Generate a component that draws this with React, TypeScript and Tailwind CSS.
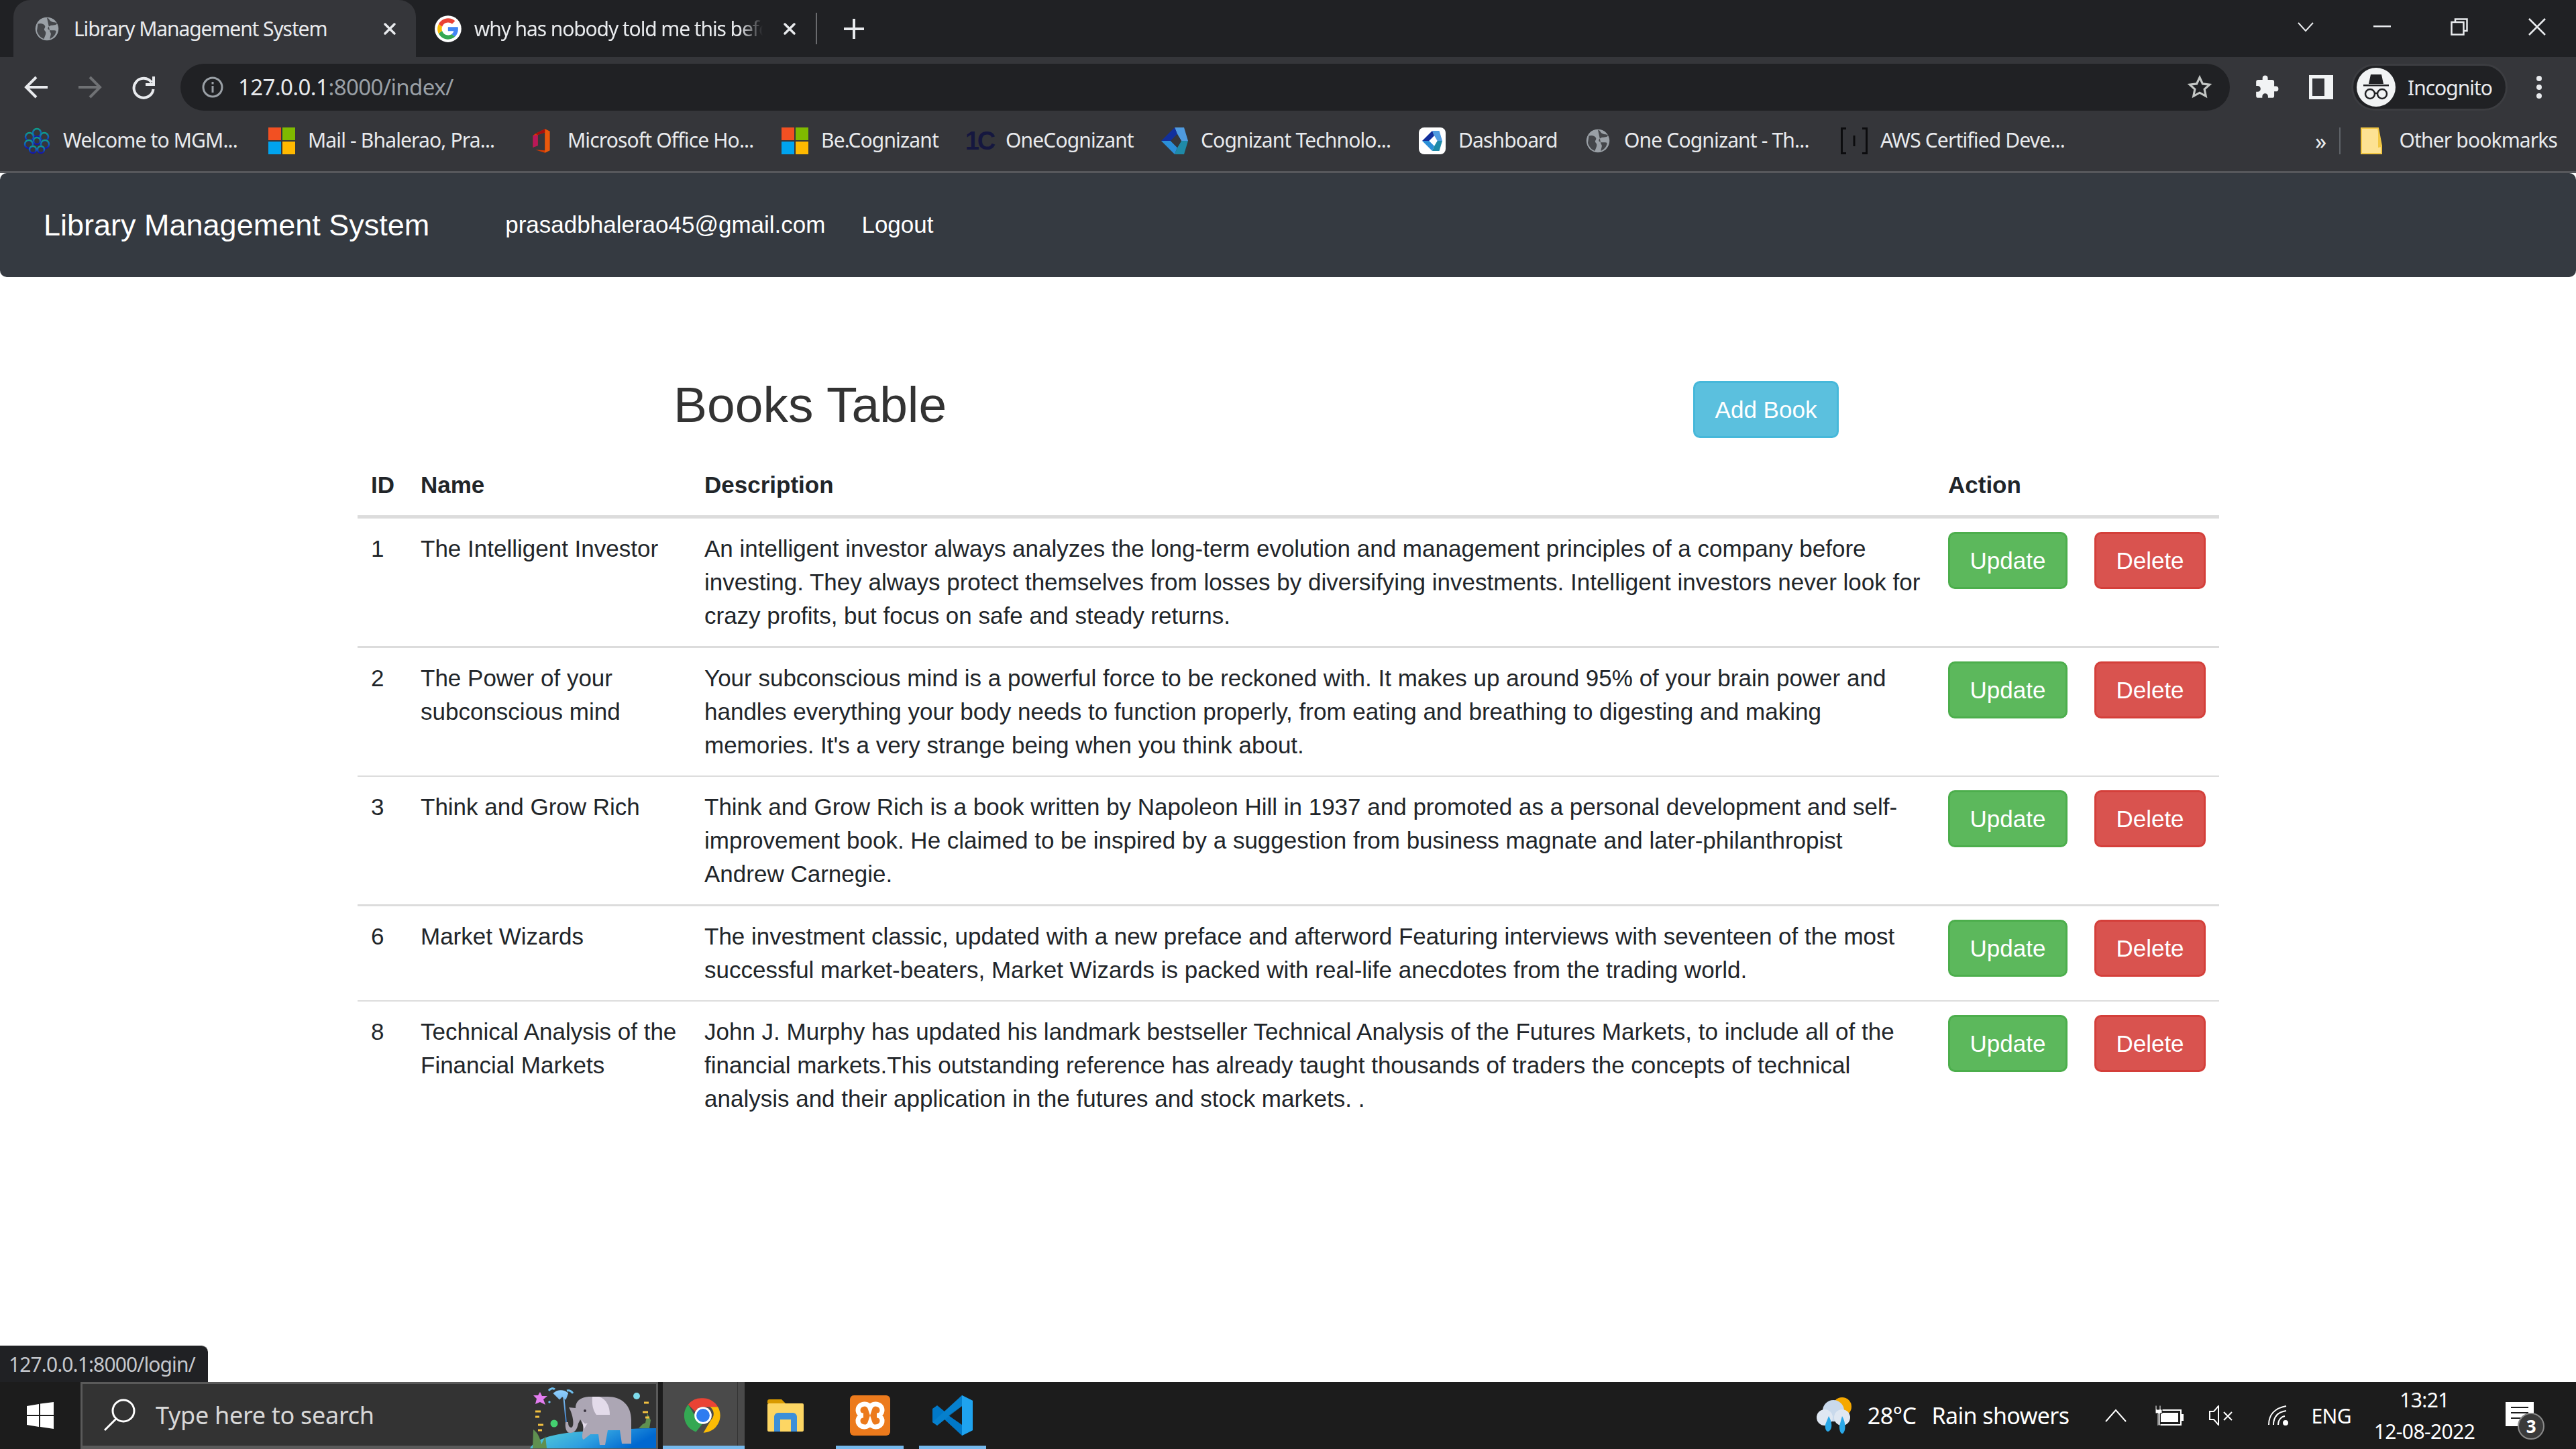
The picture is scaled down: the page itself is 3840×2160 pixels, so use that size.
const books = [
  {
    id: 1,
    name: ['The Intelligent Investor'],
    border: '',
    lines: [
      'An intelligent investor always analyzes the long-term evolution and management principles of a company before',
      'investing. They always protect themselves from losses by diversifying investments. Intelligent investors never look for',
      'crazy profits, but focus on safe and steady returns.',
    ],
  },
  {
    id: 2,
    name: ['The Power of your', 'subconscious mind'],
    border: 'border-t-[3px] border-[#dcdcdc]',
    lines: [
      'Your subconscious mind is a powerful force to be reckoned with. It makes up around 95% of your brain power and',
      'handles everything your body needs to function properly, from eating and breathing to digesting and making',
      "memories. It's a very strange being when you think about.",
    ],
  },
  {
    id: 3,
    name: ['Think and Grow Rich'],
    border: 'border-t-2 border-[#dcdcdc]',
    lines: [
      'Think and Grow Rich is a book written by Napoleon Hill in 1937 and promoted as a personal development and self-',
      'improvement book. He claimed to be inspired by a suggestion from business magnate and later-philanthropist',
      'Andrew Carnegie.',
    ],
  },
  {
    id: 6,
    name: ['Market Wizards'],
    border: 'border-t-[3px] border-[#dcdcdc]',
    lines: [
      'The investment classic, updated with a new preface and afterword Featuring interviews with seventeen of the most',
      'successful market-beaters, Market Wizards is packed with real-life anecdotes from the trading world.',
    ],
  },
  {
    id: 8,
    name: ['Technical Analysis of the', 'Financial Markets'],
    border: 'border-t-2 border-[#dcdcdc]',
    lines: [
      'John J. Murphy has updated his landmark bestseller Technical Analysis of the Futures Markets, to include all of the',
      'financial markets.This outstanding reference has already taught thousands of traders the concepts of technical',
      'analysis and their application in the futures and stock markets. .',
    ],
  },
];

const GlobeIcon = ({ size = 36 }: { size?: number }) => (
  <svg width={size} height={size} viewBox="0 0 24 24">
    <circle cx="12" cy="12" r="11.5" fill="#9aa0a6" />
    <path d="M3 7c3-1 6 0 7 2s-2 3 0 5 0 5-1 8c-3-1-6-4-7-8M12 1c3 1 2 3 5 4s4 0 5 2c-2 2-5 1-7 2s-3 3-1 4 5 0 7 1c0 3-2 6-6 8 0-3 2-5 0-7" fill="#35363a" opacity="0.85" />
  </svg>
);

const GoogleIcon = () => (
  <svg width="40" height="40" viewBox="0 0 48 48">
    <circle cx="24" cy="24" r="24" fill="#fff" />
    <g transform="translate(5 5) scale(0.79)">
      <path fill="#EA4335" d="M24 9.5c3.5 0 6.7 1.2 9.2 3.600l6.900-6.900C35.900 2.400 30.500 0 24 0 14.600 0 6.500 5.400 2.600 13.200l8 6.200C12.500 13.700 17.800 9.500 24 9.500z" />
      <path fill="#4285F4" d="M47 24.500c0-1.600-.1-3.100-.4-4.500H24v9h12.900c-.6 3-2.200 5.500-4.800 7.200l7.700 6C44.300 38 47 31.900 47 24.500z" />
      <path fill="#FBBC05" d="M10.600 28.600c-.5-1.400-.8-3-.8-4.600s.3-3.200.8-4.600l-8-6.200C.9 16.500 0 20.100 0 24s.9 7.500 2.600 10.800l8-6.200z" />
      <path fill="#34A853" d="M24 48c6.500 0 11.900-2.100 15.900-5.800l-7.700-6c-2.200 1.500-5 2.300-8.200 2.300-6.200 0-11.500-4.200-13.400-9.900l-8 6.200C6.500 42.600 14.600 48 24 48z" />
    </g>
  </svg>
);

const MsIcon = () => (
  <svg width="40" height="40" viewBox="0 0 40 40">
    <rect width="19" height="19" fill="#f25022" />
    <rect x="21" width="19" height="19" fill="#7fba00" />
    <rect y="21" width="19" height="19" fill="#00a4ef" />
    <rect x="21" y="21" width="19" height="19" fill="#ffb900" />
  </svg>
);

const MgmIcon = () => (
  <svg width="40" height="40" viewBox="0 0 40 40" fill="none" strokeWidth="2.500">
    <defs>
      <linearGradient id="mgm" x1="0" y1="0" x2="0" y2="1">
        <stop offset="0" stopColor="#0f9d8a" />
        <stop offset="0.5" stopColor="#0f5fc0" />
        <stop offset="1" stopColor="#1414a8" />
      </linearGradient>
    </defs>
    <g stroke="url(#mgm)">
      <circle cx="20" cy="8" r="6" />
      <circle cx="9" cy="14" r="6" />
      <circle cx="31" cy="14" r="6" />
      <circle cx="8" cy="25" r="6" />
      <circle cx="32" cy="25" r="6" />
      <circle cx="14" cy="33" r="5" />
      <circle cx="26" cy="33" r="5" />
      <circle cx="20" cy="20" r="5" />
    </g>
  </svg>
);

const OfficeIcon = () => (
  <svg width="32" height="40" viewBox="0 0 36 40">
    <path d="M8 8 24 0l8 4v32l-8 4-16-5 16 1V6L12 10v18l-8 3V11z" fill="#d83b01" />
    <path d="M24 0l8 4v32l-8 4z" fill="#e8590c" />
    <path d="M4 11l8-1v18l-8 3z" fill="#b8175a" />
    <path d="M8 8 24 0v6L12 10z" fill="#a50e0e" />
  </svg>
);

const HexIcon = ({ small = false }: { small?: boolean }) => (
  <svg width={small ? 30 : 40} height={small ? 34 : 40} viewBox="0 0 40 40">
    <polygon points="20,0 34,0 40,20 30,20 24,10" fill="#4f9be0" />
    <polygon points="20,0 24,10 14,20 0,20" fill="#12309c" />
    <polygon points="0,20 14,20 24,30 20,40" fill="#2b8fd8" />
    <polygon points="20,40 24,30 30,20 40,20 34,40" fill="#1f8aa8" />
    <polygon points="14,20 24,10 30,20 24,30" fill={small ? '#fff' : '#35363a'} />
  </svg>
);

const BookmarkIcons = {
  mgm: <MgmIcon />,
  ms: <MsIcon />,
  office: <OfficeIcon />,
  oneC: <span className="font-['Liberation_Sans',sans-serif] text-[38px] leading-[40px] text-[#15173f] tracking-[-3px] font-bold">1C</span>,
  hex: <HexIcon />,
  dash: (
    <span className="flex h-10 w-10 items-center justify-center rounded-[8px] bg-white">
      <HexIcon small />
    </span>
  ),
  globe: <GlobeIcon />,
  aws: (
    <svg width="40" height="40" viewBox="0 0 40 40" fill="none" stroke="#0c0c0e" strokeWidth="3">
      <path d="M8 1.500H1.500v37H8M32 1.500h6.500v37H32M20 12v16" />
    </svg>
  ),
};

const bookmarks = [
  { icon: BookmarkIcons.mgm, label: 'Welcome to MGM...', box: 'w-[365px]' },
  { icon: BookmarkIcons.ms, label: 'Mail - Bhalerao, Pra...', box: 'w-[387px]' },
  { icon: BookmarkIcons.office, label: 'Microsoft Office Ho...', box: 'w-[378px]' },
  { icon: BookmarkIcons.ms, label: 'Be.Cognizant', box: 'w-[275px]' },
  { icon: BookmarkIcons.oneC, label: 'OneCognizant', box: 'w-[291px]' },
  { icon: BookmarkIcons.hex, label: 'Cognizant Technolo...', box: 'w-[384px]' },
  { icon: BookmarkIcons.dash, label: 'Dashboard', box: 'w-[247px]' },
  { icon: BookmarkIcons.globe, label: 'One Cognizant - Th...', box: 'w-[382px]' },
  { icon: BookmarkIcons.aws, label: 'AWS Certified Deve...', box: 'w-[671px]' },
];

const CloseIcon = ({ color = '#e8eaed' }: { color?: string }) => (
  <svg width="22" height="22" viewBox="0 0 22 22" stroke={color} strokeWidth="3.500" strokeLinecap="round">
    <path d="M4 4l14 14M18 4 4 18" />
  </svg>
);

const TabStrip = () => (
  <div className="flex h-[85px] items-stretch bg-[#202124] pl-5 text-[30px] tracking-[-1.1px] text-[#e8eaed]">
    <div className="flex w-[600px] items-center rounded-t-[25px] bg-[#35363a] pl-8 pr-7">
      <GlobeIcon />
      <span className="ml-[22px] flex-1 whitespace-nowrap">Library Management System</span>
      <CloseIcon />
    </div>
    <div className="flex w-[596px] items-center pl-7 pr-7">
      <GoogleIcon />
      <span className="ml-[19px] w-[433px] overflow-hidden whitespace-nowrap [mask-image:linear-gradient(90deg,#000_92%,transparent)]">why has nobody told me this before</span>
      <span className="ml-[29px]">
        <CloseIcon />
      </span>
    </div>
    <div className="my-[19px] w-[2px] bg-[#6a6b6e]" />
    <svg className="ml-[39px] self-center" width="32" height="32" viewBox="0 0 32 32" stroke="#e8eaed" strokeWidth="4">
      <path d="M16 1v30M1 16h30" />
    </svg>
    <div className="ml-auto flex items-center self-start pt-[27px]">
      <svg width="26" height="18" viewBox="0 0 26 18" fill="none" stroke="#e8eaed" strokeWidth="2">
        <path d="M2 3l11 12L24 3" />
      </svg>
      <svg className="ml-[88px]" width="26" height="4" viewBox="0 0 26 4">
        <rect width="26" height="2.500" fill="#e8eaed" />
      </svg>
      <svg className="ml-[89px]" width="26" height="26" viewBox="0 0 26 26" fill="none" stroke="#e8eaed" strokeWidth="2.500">
        <rect x="1.500" y="6" width="18" height="18.500" />
        <path d="M7 6V1.500h17.500V19H20" />
      </svg>
      <svg className="ml-[90px] mr-[45px]" width="26" height="26" viewBox="0 0 26 26" stroke="#e8eaed" strokeWidth="2.500">
        <path d="M1 1l24 24M25 1 1 25" />
      </svg>
    </div>
  </div>
);

const Toolbar = () => (
  <div className="flex h-[80px] items-start bg-[#35363a] pl-[36px] pt-[10px]">
    <div className="flex h-[70px] items-center">
      <svg width="36" height="36" viewBox="0 0 36 36" fill="none" stroke="#e8eaed" strokeWidth="4">
        <path d="M35 18H4M18 3 3 18l15 15" />
      </svg>
      <svg className="ml-[44px]" width="36" height="36" viewBox="0 0 36 36" fill="none" stroke="#6f7174" strokeWidth="4">
        <path d="M1 18h31M18 3l15 15-15 15" />
      </svg>
      <svg className="ml-[44px]" width="36" height="36" viewBox="0 0 36 36" fill="none" stroke="#e8eaed" strokeWidth="4">
        <path d="M30 11a14.500 14.500 0 1 0 2.500 10" />
        <path d="M33 2v12H21" />
      </svg>
    </div>
    <div className="ml-[37px] flex h-[70px] w-[3055px] items-center rounded-full bg-[#202124] pl-[32px] pr-[26px]">
      <svg width="32" height="32" viewBox="0 0 32 32" fill="none" stroke="#9aa0a6" strokeWidth="3">
        <circle cx="16" cy="16" r="14" />
        <path d="M16 14v10M16 8v3.500" />
      </svg>
      <span className="ml-[22px] text-[33px] text-[#e8eaed]">
        127.0.0.1<span className="text-[#9aa0a6]">:8000/index/</span>
      </span>
      <svg className="ml-auto" width="38" height="38" viewBox="0 0 24 24" fill="none" stroke="#c4c7c5" strokeWidth="2">
        <path d="M12 2.800l2.800 6 6.500.8-4.800 4.400 1.300 6.400-5.800-3.200-5.800 3.200 1.300-6.400L2.700 9.600l6.500-.8z" />
      </svg>
    </div>
    <div className="flex h-[70px] items-center">
      <svg className="ml-[36px]" width="38" height="38" viewBox="0 0 24 24" fill="#f1f3f4">
        <path d="M20.500 11H19V7a2 2 0 0 0-2-2h-4V3.500a2.500 2.500 0 0 0-5 0V5H4a2 2 0 0 0-2 2v3.800h1.500a2.700 2.700 0 0 1 0 5.400H2V20a2 2 0 0 0 2 2h3.800v-1.500a2.700 2.700 0 0 1 5.400 0V22H17a2 2 0 0 0 2-2v-4h1.500a2.500 2.500 0 0 0 0-5z" />
      </svg>
      <svg className="ml-[44px]" width="36" height="36" viewBox="0 0 36 36">
        <rect width="36" height="36" fill="#f1f3f4" />
        <rect x="5" y="5" width="18" height="26" fill="#35363a" />
      </svg>
      <div className="ml-[27px] flex h-[70px] w-[233px] items-center rounded-full border-[3px] border-[#3c3d41] bg-[#202124] pl-[5px]">
        <svg width="58" height="58" viewBox="0 0 58 58">
          <circle cx="29" cy="29" r="29" fill="#f1f3f4" />
          <path d="M21 10h16l3 14H18z" fill="#202124" />
          <rect x="10" y="25" width="38" height="2.500" fill="#202124" />
          <g fill="none" stroke="#202124" strokeWidth="2.500">
            <circle cx="20" cy="39" r="7" />
            <circle cx="38" cy="39" r="7" />
            <path d="M27 38h4" />
          </g>
        </svg>
        <span className="ml-[18px] text-[30px] tracking-[-1px] text-[#e8eaed]">Incognito</span>
      </div>
      <svg className="ml-[42px]" width="10" height="36" viewBox="0 0 10 36" fill="#e8eaed">
        <circle cx="5" cy="5" r="4" />
        <circle cx="5" cy="18" r="4" />
        <circle cx="5" cy="31" r="4" />
      </svg>
    </div>
  </div>
);

const BookmarkBar = () => (
  <div className="flex h-[90px] items-center bg-[#35363a] pl-[35px] text-[30px] tracking-[-0.85px] text-[#e8eaed]">
    {bookmarks.map((b, i) => (
      <div key={i} className={`flex shrink-0 items-center ${b.box}`}>
        <span className="flex w-10 shrink-0 justify-center">{b.icon}</span>
        <span className="ml-[19px] mb-[3px] whitespace-nowrap">{b.label}</span>
      </div>
    ))}
    <span className="ml-[36px] text-[34px] leading-none">»</span>
    <div className="ml-[20px] h-10 w-[2px] bg-[#5f6368]" />
    <svg className="ml-[30px]" width="32" height="40" viewBox="0 0 32 40">
      <path d="M1 1h25l5 26v12H1z" fill="#fde293" stroke="#f2c744" strokeWidth="2" />
      <path d="M26 1l5 28-5 1z" fill="#f2c744" />
    </svg>
    <span className="ml-[25px] mb-[3px] whitespace-nowrap">Other bookmarks</span>
  </div>
);

const Navbar = () => (
  <div className="flex h-[155px] items-center rounded-[10px] bg-[#353a41] pl-[65px] font-['Liberation_Sans',sans-serif] text-[35px] text-white">
    <span className="text-[45px]">Library Management System</span>
    <span className="ml-[113px]">prasadbhalerao45@gmail.com</span>
    <span className="ml-[54px]">Logout</span>
  </div>
);

const BooksTable = () => (
  <div className="ml-[533px] w-[2775px] pt-[155px] font-['Liberation_Sans',sans-serif] text-[35px] leading-[50px] text-[#212529]">
    <div className="flex h-[110px] items-start">
      <h1 className="ml-[471px] -mt-[2px] text-[75px] font-medium leading-[75px] text-[#333]">Books Table</h1>
      <button className="ml-auto mr-[567px] h-[85px] w-[217px] rounded-[10px] border-[3px] border-[#46b8da] bg-[#5bc0de] text-white">Add Book</button>
    </div>
    <table className="w-full table-fixed border-collapse">
      <thead>
        <tr className="border-b-[5px] border-[#dcdcdc] text-left font-bold">
          <th className="w-[74px] p-5">ID</th>
          <th className="w-[423px] p-5">Name</th>
          <th className="w-[1854px] p-5">Description</th>
          <th className="p-5">Action</th>
        </tr>
      </thead>
      <tbody>
        {books.map((book) => (
          <tr key={book.id} className={book.border}>
            <td className="p-5 align-top">{book.id}</td>
            <td className="p-5 align-top">
              {book.name.map((n) => (
                <div key={n} className="whitespace-nowrap">{n}</div>
              ))}
            </td>
            <td className="p-5 align-top">
              {book.lines.map((l) => (
                <div key={l} className="whitespace-nowrap">{l}</div>
              ))}
            </td>
            <td className="p-5 align-top">
              <div className="flex gap-10">
                <button className="h-[85px] w-[178px] rounded-[10px] border-[3px] border-[#4cae4c] bg-[#5cb85c] text-white">Update</button>
                <button className="h-[85px] w-[166px] rounded-[10px] border-[3px] border-[#d43f3a] bg-[#d9534f] text-white">Delete</button>
              </div>
            </td>
          </tr>
        ))}
      </tbody>
    </table>
  </div>
);

const Elephant = () => (
  <svg className="mt-[3px] ml-auto" width="198" height="97" viewBox="0 3 198 97">
    <defs>
      <linearGradient id="water" x1="0" y1="0" x2="1" y2="0.300">
        <stop offset="0" stopColor="#5cd6d6" />
        <stop offset="0.600" stopColor="#2e9fe0" />
        <stop offset="1" stopColor="#0068d0" />
      </linearGradient>
      <linearGradient id="jet" x1="0" y1="0" x2="0" y2="1">
        <stop offset="0" stopColor="#8fd0ff" />
        <stop offset="1" stopColor="#3a78c0" />
      </linearGradient>
    </defs>
    <path d="M10 100c10-18 50-25 100-26 30-2 60-4 88-4v30z" fill="url(#water)" />
    <path d="M25 16l3 6 8 0-6 5 3 8-8-4-7 3 2-8-5-5 7 0z" fill="#e47df0" />
    <circle cx="169" cy="22" r="5" fill="#7fdcec" />
    <circle cx="46" cy="63" r="5.500" fill="#44d070" />
    <path d="M46 18c6-5 14-5 20 0l-3 8-5-4-4 4zM60 20l4 42" fill="url(#jet)" stroke="url(#jet)" strokeWidth="2" />
    <path d="M38 14c3-4 7-4 9-2M65 14c4-1 7 1 9 4M38 30l2 2" fill="none" stroke="#6fc0f0" strokeWidth="3" />
    <path d="M15 72c6 4 10 12 12 22l6-12 2 18H14zM190 58l-2 12h-16l6-6 4-2 3-14z" fill="#5f9050" />
    <path d="M18 45h8M18 53h6M22 65h8M22 73h6M180 32h7M178 46h8M182 54h6" stroke="#f2c040" strokeWidth="3" />
    <path d="M78 40c0-12 10-17 22-17h26c20 0 35 12 35 35v35h-14l-3-20h-18l-4 22H114l-2-16H100l-10 8c-4-2-1-12 0-20l-5-10-3 6c-2 10-6 14-12 14-6 0-8-8-7-16h4c0 6 2 8 5 8 5-2 2-20-4-30z" fill="#aca6b4" />
    <path d="M103 23h10c11 4 16 14 16 27h-20c-5-6-7-16-6-27z" fill="#e3dbea" />
    <circle cx="92" cy="44" r="2" fill="#3a3440" />
    <path d="M88 58c2 6 6 6 8 4l-6 10z" fill="#e3dbea" />
  </svg>
);

const ChromeIcon = () => (
  <svg width="56" height="56" viewBox="0 0 48 48">
    <path d="M24 2a22 22 0 0 1 19 11H24a11 11 0 0 0-10 6L5 10a22 22 0 0 1 19-8z" fill="#ea4335" />
    <path d="M5 10l9.500 16a11 11 0 0 0 10 7L15 45A22 22 0 0 1 5 10z" fill="#34a853" />
    <path d="M43 13a22 22 0 0 1-18 33l-.5 0L34 30a11 11 0 0 0-1-17z" fill="#fbbc05" />
    <circle cx="24" cy="24" r="11" fill="#fff" />
    <circle cx="24" cy="24" r="8.500" fill="#2f7cf0" />
  </svg>
);

const Taskbar = () => (
  <div className="flex h-[100px] items-stretch bg-[#1c1c1c] font-['Noto_Sans',sans-serif] text-white">
    <svg className="ml-[40px] mr-[40px] self-center" width="40" height="40" viewBox="0 0 40 40" fill="#fff">
      <path d="M0 6l18-3v16H0zM20 2.500 40 0v19H20zM0 21h18v16L0 34zM20 21h20v19l-20-3z" />
    </svg>
    <div className="flex w-[861px] items-center border-[3px] border-[#5a5a5a] border-b-[5px] bg-[#333]">
      <svg className="ml-[30px]" width="50" height="50" viewBox="0 0 50 50" fill="none" stroke="#fff" strokeWidth="3">
        <circle cx="31" cy="19" r="16" />
        <path d="M20 31 3 48" />
      </svg>
      <span className="ml-[29px] mt-[2px] whitespace-nowrap text-[36px] tracking-[-0.3px] text-[#d8d8d8]">Type here to search</span>
      <Elephant />
    </div>
    <div className="relative ml-[7px] flex w-[122px] items-center bg-[#4a4a4a] pl-[32px]">
      <ChromeIcon />
      <div className="absolute inset-y-0 right-[10px] w-[1px] bg-[#333]" />
      <div className="absolute bottom-0 left-0 right-0 h-[5px] bg-[#76b9ed]" />
    </div>
    <div className="flex w-[136px] items-center justify-center pr-[14px]">
      <svg width="54" height="48" viewBox="0 0 54 48">
        <path d="M0 3a3 3 0 0 1 3-3h18l6 6H0z" fill="#d99a00" />
        <rect y="6" width="54" height="42" rx="2" fill="#fdd663" />
        <path d="M10 48V26a6 6 0 0 1 6-6h22a6 6 0 0 1 6 6v22h-9V30H19v18z" fill="#3d8fd8" />
      </svg>
    </div>
    <div className="relative flex w-[101px] items-center justify-center">
      <div className="flex h-[60px] w-[60px] items-center justify-center rounded-[6px] bg-[#ec7a1c]">
        <svg width="44" height="44" viewBox="0 0 44 44" fill="none" stroke="#fff" strokeWidth="7">
          <path d="M14 5c-6 0-10 4-10 9s4 8 8 8c-4 0-8 3-8 8s4 9 10 9c5 0 7-3 8-6 1 3 3 6 8 6 6 0 10-4 10-9s-4-8-8-8c4 0 8-3 8-8s-4-9-10-9c-5 0-7 3-8 6-1-3-3-6-8-6z" />
        </svg>
      </div>
      <div className="absolute bottom-0 left-0 right-0 h-[5px] bg-[#76b9ed]" />
    </div>
    <div className="relative ml-[23px] flex w-[100px] items-center justify-center">
      <svg width="60" height="60" viewBox="0 0 60 60">
        <path d="M44 0 60 8v44l-16 8-26-24L7 45l-7-5V20l7-5 11 9z" fill="#0078c8" />
        <path d="M44 0 60 8v44l-16 8z" fill="#1fa3ef" />
        <path d="M44 16 24 30l20 14z" fill="#1c1c1c" />
        <path d="M44 0v16L7 45l-7-5z" fill="#0a86d0" opacity="0.600" />
      </svg>
      <div className="absolute bottom-0 left-0 right-0 h-[5px] bg-[#76b9ed]" />
    </div>
    <div className="ml-auto flex items-center">
      <svg width="54" height="54" viewBox="0 0 54 54">
        <circle cx="38" cy="14" r="14" fill="#f5a800" />
        <circle cx="25" cy="20" r="16" fill="#c9d9ec" />
        <circle cx="12" cy="30" r="12" fill="#dfe7f2" />
        <circle cx="38" cy="30" r="12" fill="#dfe7f2" />
        <path d="M18 28c5 8 6 18 1 22s-8-6-5-12zM38 28c5 8 6 20 2 25s-8-8-5-14z" fill="#2aa8e8" />
      </svg>
      <span className="ml-[22px] text-[34px]">28°C</span>
      <span className="ml-[23px] whitespace-nowrap text-[34px]">Rain showers</span>
      <svg className="ml-[54px]" width="32" height="20" viewBox="0 0 32 20" fill="none" stroke="#fff" strokeWidth="2">
        <path d="M1 19 16 2l15 17" />
      </svg>
      <svg className="ml-[43px]" width="42" height="30" viewBox="0 0 42 30">
        <rect x="4" y="7" width="34" height="22" fill="none" stroke="#fff" strokeWidth="2" />
        <rect x="8" y="11" width="26" height="14" fill="#fff" />
        <rect x="38" y="13" width="4" height="10" fill="#fff" />
        <path d="M0 0h2v6h4V0h2v6h2v6H7v18H4V12H0z" fill="#fff" stroke="#1c1c1c" strokeWidth="1" />
      </svg>
      <svg className="ml-[38px]" width="38" height="30" viewBox="0 0 38 30" fill="none" stroke="#fff" strokeWidth="2">
        <path d="M1 9h6l7-8v28l-7-8H1zM22 10l12 12M34 10 22 22" />
      </svg>
      <svg className="ml-[50px]" width="30" height="30" viewBox="0 0 30 30" fill="none" stroke="#fff" strokeWidth="2">
        <path d="M1 29C1 14 10 4 27 1M8 29C8 18 14 10 27 8M15 29c0-7 4-12 10-13" />
        <circle cx="26" cy="26" r="3" fill="#fff" />
      </svg>
      <span className="ml-[34px] text-[30px]">ENG</span>
      <div className="ml-[33px] flex w-[152px] flex-col items-center text-[30px] leading-[47px]">
        <span>13:21</span>
        <span>12-08-2022</span>
      </div>
      <div className="relative ml-[45px] mr-[63px] mt-[-4px] h-[36px] w-[42px] bg-white">
        <div className="mx-[8px] mt-[7px] h-[2px] bg-[#1c1c1c]" />
        <div className="mx-[8px] mt-[6px] h-[2px] bg-[#1c1c1c]" />
        <div className="mx-[8px] mt-[6px] h-[2px] bg-[#1c1c1c]" />
        <span className="absolute left-[18px] top-[16px] flex h-10 w-10 items-center justify-center rounded-full border-2 border-[#8a8a8a] bg-[#3a3a3a] text-[26px] font-bold">3</span>
      </div>
    </div>
  </div>
);

export default function App() {
  return (
    <div className="relative flex h-[2160px] w-[3840px] flex-col overflow-hidden bg-white font-['Noto_Sans',sans-serif] tracking-[-0.6px]">
      <div className="bg-[#202124]">
        <TabStrip />
        <Toolbar />
        <BookmarkBar />
        <div className="h-[3px] bg-[#57585c]" />
      </div>
      <div className="tracking-normal">
        <Navbar />
      </div>
      <div className="flex-1 tracking-normal">
        <BooksTable />
      </div>
      <div className="absolute bottom-[100px] left-0 flex h-[55px] w-[310px] items-center rounded-tr-[10px] border-t border-[#e0e0e0] bg-[#202124] pl-[13px] text-[30px] tracking-[-0.9px] text-[#c4c7cc]">
        127.0.0.1:8000/login/
      </div>
      <Taskbar />
    </div>
  );
}
